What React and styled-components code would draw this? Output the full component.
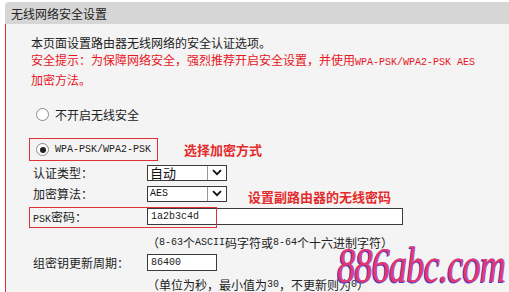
import React from "react";
import styled, { createGlobalStyle } from "styled-components";

const Global = createGlobalStyle`
  html, body { margin: 0; padding: 0; background: #ffffff; }
  body { font-family: "Noto Sans CJK SC", "Noto Sans", sans-serif; }
  * { box-sizing: border-box; }
`;

const Page = styled.div`
  width: 509px;
  height: 292px;
  overflow: hidden;
  position: relative;
  background: #ffffff;
  padding-top: 2px;
`;

const Panel = styled.div`
  margin-left: 5px;
  display: flex;
  flex-direction: column;
`;

const Header = styled.div`
  height: 22px;
  background: #d6d6d6;
  border-top-left-radius: 4px;
  display: flex;
  align-items: center;
  padding-left: 6px;
  font-size: 12px;
  color: #222;
`;

const Body = styled.div`
  background: #f4f4f4;
  border-left: 1px solid #e0303a;
  height: 280px;
  display: flex;
  flex-direction: column;
  padding-top: 10px;
`;

const Desc = styled.div`
  margin-left: 25px;
  font-size: 12px;
  line-height: 17px;
  color: ${(p) => (p.$warn ? "#e8141e" : "#222")};
`;

const Mono = styled.span`
  font-family: "Liberation Mono", monospace;
  font-size: 10px;
`;

const RadioRow = styled.div`
  display: flex;
  align-items: center;
  gap: 6px;
  height: 20px;
  margin-left: 30px;
  margin-top: 16px;
  font-size: 12px;
  color: #222;
`;

const Radio = styled.span`
  width: 13px;
  height: 13px;
  border-radius: 50%;
  border: 1px solid #8a8a8a;
  background: #fff;
  display: flex;
  align-items: center;
  justify-content: center;
  flex: none;
  &::after {
    content: "";
    display: ${(p) => (p.$checked ? "block" : "none")};
    width: 6px;
    height: 6px;
    border-radius: 50%;
    background: #222;
  }
`;

const AnnotatedRow = styled.div`
  display: flex;
  align-items: center;
  margin-top: 14px;
  margin-left: 23px;
`;

const RedBox = styled.div`
  display: flex;
  align-items: center;
  gap: 6px;
  height: 23px;
  padding: 0 6px;
  border: 1px solid #e0303a;
  font-size: 12px;
  color: #222;
`;

const Note = styled.span`
  font-size: 13px;
  font-weight: 700;
  color: #e42a2a;
  margin-left: ${(p) => p.$gap || 0}px;
  padding-top: ${(p) => p.$down || 0}px;
  white-space: nowrap;
`;

const FormRow = styled.div`
  position: relative;
  display: flex;
  align-items: center;
  height: ${(p) => p.$h}px;
  margin-left: 27px;
  margin-top: ${(p) => p.$mt || 0}px;
  font-size: 12px;
  color: #222;
`;

const Label = styled.span`
  width: 114px;
  flex: none;
`;

const Select = styled.div`
  width: 80px;
  height: 16px;
  border: 1px solid #3a3a3a;
  background: #fff;
  display: flex;
  align-items: stretch;
  flex: none;
`;

const SelectValue = styled.span`
  flex: 1;
  display: flex;
  align-items: center;
  padding-left: 2px;
  font-size: ${(p) => (p.$mono ? "10px" : "13px")};
  font-family: ${(p) =>
    p.$mono ? '"Liberation Mono", monospace' : '"Noto Sans CJK SC", sans-serif'};
  color: #111;
`;

const SelectButton = styled.span`
  width: 19px;
  border-left: 1px solid #9a9a9a;
  display: flex;
  align-items: center;
  justify-content: center;
  background: #fff;
`;

const Input = styled.div`
  width: ${(p) => p.$w}px;
  height: 17px;
  border: 1px solid #3a3a3a;
  background: #fff;
  display: flex;
  align-items: center;
  padding-left: 3px;
  font-family: "Liberation Mono", monospace;
  font-size: 10px;
  color: #222;
  flex: none;
`;

const Outline = styled.div`
  position: absolute;
  left: -4px;
  top: 3px;
  width: 188px;
  height: 21px;
  border: 1px solid #e0303a;
  pointer-events: none;
`;

const Hint = styled.div`
  margin-left: 141px;
  height: ${(p) => p.$h}px;
  margin-top: ${(p) => p.$mt || 0}px;
  display: flex;
  align-items: center;
  font-size: 12px;
  color: #222;
  white-space: nowrap;
`;

const Watermark = styled.div`
  position: absolute;
  left: 337px;
  top: 240px;
  font-family: "Liberation Serif", serif;
  font-style: italic;
  font-size: 50px;
  line-height: 1;
  color: #e8366a;
  letter-spacing: -1px;
  transform: scaleX(0.72);
  transform-origin: left top;
  text-shadow: -1px 1px 0 #3f3fd8, 1px 0 0 #6a4ae0;
  white-space: nowrap;
`;

const Chevron = () => (
  <svg width="10" height="7" viewBox="0 0 10 7">
    <path d="M1 1.2 L5 5.2 L9 1.2" fill="none" stroke="#111" strokeWidth="1.8" />
  </svg>
);

export default function App() {
  return (
    <Page>
      <Global />
      <Panel>
        <Header>无线网络安全设置</Header>
        <Body>
          <Desc>本页面设置路由器无线网络的安全认证选项。</Desc>
          <Desc $warn>
            安全提示：为保障网络安全，强烈推荐开启安全设置，并使用<Mono>WPA-PSK/WPA2-PSK AES</Mono>
          </Desc>
          <Desc $warn>加密方法。</Desc>

          <RadioRow>
            <Radio />
            <span>不开启无线安全</span>
          </RadioRow>

          <AnnotatedRow>
            <RedBox>
              <Radio $checked />
              <Mono>WPA-PSK/WPA2-PSK</Mono>
            </RedBox>
            <Note $gap={26}>选择加密方式</Note>
          </AnnotatedRow>

          <FormRow $h={21} $mt={1}>
            <Label>认证类型：</Label>
            <Select>
              <SelectValue>自动</SelectValue>
              <SelectButton><Chevron /></SelectButton>
            </Select>
          </FormRow>
          <FormRow $h={21}>
            <Label>加密算法：</Label>
            <Select>
              <SelectValue $mono>AES</SelectValue>
              <SelectButton><Chevron /></SelectButton>
            </Select>
            <Note $gap={21} $down={6}>设置副路由器的无线密码</Note>
          </FormRow>
          <FormRow $h={24}>
            <Label><Mono>PSK</Mono>密码：</Label>
            <Input $w={256}>1a2b3c4d</Input>
            <Outline />
          </FormRow>
          <Hint $h={20} $mt={4}>
            （<Mono>8-63</Mono>个<Mono>ASCII</Mono>码字符或<Mono>8-64</Mono>个十六进制字符）
          </Hint>
          <FormRow $h={21}>
            <Label>组密钥更新周期：</Label>
            <Input $w={70}>86400</Input>
          </FormRow>
          <Hint $h={22}>
            （单位为秒，最小值为<Mono>30</Mono>，不更新则为<Mono>0</Mono>）
          </Hint>
        </Body>
      </Panel>
      <Watermark>886abc.com</Watermark>
    </Page>
  );
}
